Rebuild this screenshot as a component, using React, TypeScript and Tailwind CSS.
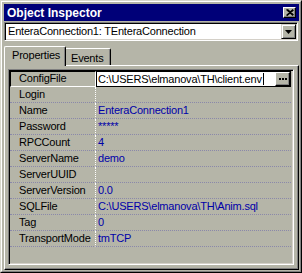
import React from 'react';

const rows: [string, string][] = [
  ['ConfigFile', 'C:\\USERS\\elmanova\\TH\\client.env'],
  ['Login', ''],
  ['Name', 'EnteraConnection1'],
  ['Password', '*****'],
  ['RPCCount', '4'],
  ['ServerName', 'demo'],
  ['ServerUUID', ''],
  ['ServerVersion', '0.0'],
  ['SQLFile', 'C:\\USERS\\elmanova\\TH\\Anim.sql'],
  ['Tag', '0'],
  ['TransportMode', 'tmTCP'],
];

function CloseButton() {
  return (
    <div className="w-[13px] h-[11px] bg-[#b5b5a8] border-t border-l border-white border-r border-b border-r-black border-b-black shadow-[inset_-1px_-1px_0_#808080] flex items-center justify-center">
      <svg width="8" height="7" viewBox="0 0 8 7">
        <path d="M0.5 0.5 L7 6.5 M1.5 0.5 L7.5 6 M7 0.5 L0.5 6.5 M7.5 1 L1 6.5" stroke="#000" strokeWidth="1.2" />
      </svg>
    </div>
  );
}

function PropRow({ name, value, selected }: { name: string; value: string; selected?: boolean }) {
  if (selected) {
    return (
      <div className="flex h-[16px]">
        <div className="w-[86px] h-[16px] border-l border-t border-black border-b border-b-white border-r border-r-white pl-[8px] leading-[13px] text-black">
          {name}
        </div>
        <div className="flex-1 h-[16px] bg-white border border-black flex">
          <div className="flex-1 pl-[1px] leading-[14px] text-black flex items-center">
            <span>{value}</span>
            <span className="inline-block w-px h-[12px] bg-black ml-[1px]" />
          </div>
          <div className="w-[15px] h-[14px] bg-[#b5b5a8] border-t border-l border-white border-r border-b border-r-black border-b-black shadow-[inset_-1px_-1px_0_#808080] flex items-center justify-center">
            <svg width="8" height="2" viewBox="0 0 8 2">
              <rect x="0" y="0" width="2" height="2" fill="#000" />
              <rect x="3" y="0" width="2" height="2" fill="#000" />
              <rect x="6" y="0" width="2" height="2" fill="#000" />
            </svg>
          </div>
        </div>
      </div>
    );
  }
  return (
    <div className="flex h-[16px]">
      <div className="w-[86px] h-[16px] border-r border-r-white border-b border-dotted border-b-[#8a88aa] pl-[9px] leading-[15px] text-black">
        {name}
      </div>
      <div className="flex-1 h-[16px] border-b border-dotted border-b-[#8a88aa] pl-[2px] leading-[15px] text-[#0000a8]">
        {value}
      </div>
    </div>
  );
}

export default function App() {
  return (
    <div className="w-[302px] h-[273px] bg-[#b5b5a8] border-t border-l border-[#d8d8cc] border-r border-b border-r-black border-b-black font-['Liberation_Sans',Arial,sans-serif] text-[11px] tracking-[-0.2px] select-none">
      <div className="h-full border-t border-l border-white border-r border-b border-r-[#808080] border-b-[#808080] p-[2px] pr-[1px] pb-[1px] flex flex-col">
        <div className="h-[17px] bg-[#000078] flex items-center justify-between pl-[3px] pr-[3px]">
          <span className="text-white font-bold text-[12px] tracking-normal">Object Inspector</span>
          <CloseButton />
        </div>

        <div className="mt-[1px] h-[19px] border-t border-l border-[#808080] border-r border-b border-r-white border-b-white shadow-[inset_1px_1px_0_#000,inset_-1px_-1px_0_#d4d0c8] bg-white flex mr-[1px]">
          <div className="flex-1 pl-[3px] leading-[17px] text-black">EnteraConnection1: TEnteraConnection</div>
          <div className="mt-[1px] mr-[1px] w-[15px] h-[15px] bg-[#b5b5a8] border-t border-l border-[#d4d0c8] border-r border-b border-r-black border-b-black shadow-[inset_1px_1px_0_#fff,inset_-1px_-1px_0_#808080] flex items-center justify-center">
            <svg width="7" height="4" viewBox="0 0 7 4">
              <path d="M0 0 H7 L3.5 4 Z" fill="#000" />
            </svg>
          </div>
        </div>

        <div className="mt-[5px] h-[19px] flex items-end">
          <div className="relative z-10 -mb-px w-[62px] h-[20px] bg-[#b5b5a8] border-t border-l border-white border-r border-r-black shadow-[inset_-1px_0_0_#808080] rounded-t-[2px] pl-[7px] leading-[16px] text-black">
            Properties
          </div>
          <div className="w-[45px] h-[17px] bg-[#b5b5a8] border-t border-white border-r border-r-black shadow-[inset_-1px_0_0_#808080] rounded-tr-[2px] pl-[5px] leading-[18px] text-black">
            Events
          </div>
        </div>

        <div className="flex-1 border-t border-l border-white border-r border-b border-r-black border-b-black shadow-[inset_-1px_-1px_0_#808080] p-[3px] pr-[4px] pb-[4px] flex">
          <div className="flex-1 border-t border-l border-[#808080] border-r border-b border-r-white border-b-white shadow-[inset_1px_1px_0_#000,inset_-1px_-1px_0_#d4d0c8] p-[1px] pr-[2px]">
            {rows.map(([n, v], i) => (
              <PropRow key={n} name={n} value={v} selected={i === 0} />
            ))}
          </div>
        </div>
      </div>
    </div>
  );
}
